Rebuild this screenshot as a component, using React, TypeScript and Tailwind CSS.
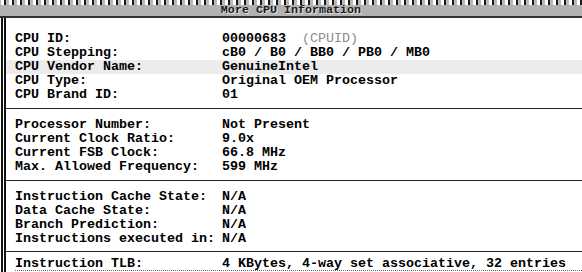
import React from "react"

type Row = { label: string; value: string; note?: string; hl?: boolean }

const sections: Row[][] = [
  [
    { label: "CPU ID:", value: "00000683", note: "(CPUID)" },
    { label: "CPU Stepping:", value: "cB0 / B0 / BB0 / PB0 / MB0" },
    { label: "CPU Vendor Name:", value: "GenuineIntel", hl: true },
    { label: "CPU Type:", value: "Original OEM Processor" },
    { label: "CPU Brand ID:", value: "01" },
  ],
  [
    { label: "Processor Number:", value: "Not Present" },
    { label: "Current Clock Ratio:", value: "9.0x" },
    { label: "Current FSB Clock:", value: "66.8 MHz" },
    { label: "Max. Allowed Frequency:", value: "599 MHz" },
  ],
  [
    { label: "Instruction Cache State:", value: "N/A" },
    { label: "Data Cache State:", value: "N/A" },
    { label: "Branch Prediction:", value: "N/A" },
    { label: "Instructions executed in:", value: "N/A" },
  ],
]

const InfoRow = ({ row }: { row: Row }) => (
  <div className={"flex h-[14px] items-center leading-[14px] pl-[9px] " + (row.hl ? "bg-[#ececec]" : "")}>
    <span className="w-[207px] shrink-0">{row.label}</span>
    <span className="whitespace-pre">
      {row.value}
      {row.note && <span className="font-normal text-[#8c8c8c]">{"  " + row.note}</span>}
    </span>
  </div>
)

export default function App() {
  return (
    <div className="w-[582px] h-[272px] overflow-hidden bg-white text-black font-['Liberation_Mono',monospace]">
      {/* title bar */}
      <div className="h-[5px] bg-[repeating-linear-gradient(90deg,#b8b8b8_0px,#b8b8b8_1px,#ffffff_1px,#ffffff_4px,#1a1a1a_4px,#1a1a1a_6px,#b8b8b8_6px,#b8b8b8_8px)]" />
      <div className="h-[11px] bg-[#b2b2b2] flex items-center justify-center">
        <span className="text-[11.7px] font-bold leading-none text-[#1c1c1c] [text-shadow:1px_1px_0_#e0e0e0]">
          More CPU Information
        </span>
      </div>
      <div className="h-[2px] bg-[#303030]" />

      <div className="h-full ml-[1px] border-l-[5px] border-double border-[#111] text-[13.33px] font-bold">
        {sections.map((rows, i) => (
          <div
            key={i}
            className={
              "border-b border-[#222] " +
              (i === 0 ? "pt-[14px] pb-[6px]" : i === 1 ? "pt-[9px] pb-[6px]" : "pt-[9px] pb-[5px]")
            }
          >
            {rows.map((r) => (
              <InfoRow key={r.label} row={r} />
            ))}
          </div>
        ))}
        <div className="pl-[9px] pt-[5px]">
          <div className="flex h-[14px] items-center leading-[13px] border-b border-dotted border-[#666]">
            <span className="w-[207px] shrink-0">Instruction TLB:</span>
            <span className="whitespace-pre">4 KBytes, 4-way set associative, 32 entries</span>
          </div>
        </div>
      </div>
    </div>
  )
}
